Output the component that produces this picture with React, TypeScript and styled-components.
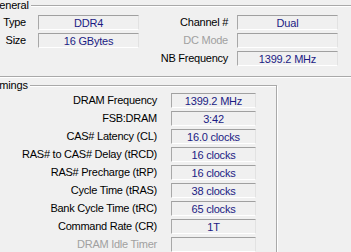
import React from "react";
import { createGlobalStyle, styled } from "styled-components";

const GlobalStyle = createGlobalStyle`
  html,
  body {
    margin: 0;
    padding: 0;
    background: #f0f0f0;
    overflow: hidden;
  }

  body {
    font-family: "Liberation Sans", Arial, sans-serif;
    font-size: 11px;
    -webkit-font-smoothing: antialiased;
  }
`;

const Window = styled.div`
  width: 351px;
  height: 252px;
  overflow: hidden;
  background: #f0f0f0;
`;

// the screenshot is a crop of the CPU-Z window, so the panels start left of the frame
const Panels = styled.div`
  margin-left: -16px;
  padding-top: 5px;
  display: flex;
  flex-direction: column;
  align-items: flex-start;
`;

const GroupBox = styled.section<{ $width: number; $top?: number; $padTop: number }>`
  position: relative;
  box-sizing: border-box;
  width: ${(p) => p.$width}px;
  margin-top: ${(p) => p.$top ?? 0}px;
  padding: ${(p) => p.$padTop}px 20px 10px 5px;
  border: 1px solid #a9a9a9;
  box-shadow:
    inset 1px 1px 0 #ffffff,
    1px 1px 0 #ffffff;
`;

// caption sits on top of the group box's top edge
const Caption = styled.span`
  position: absolute;
  top: -7px;
  left: 4px;
  padding: 0 2px;
  line-height: 12px;
  font-size: 11px;
  letter-spacing: -0.2px;
  color: #000;
  background: #f0f0f0;
`;

const GeneralGrid = styled.div`
  display: grid;
  grid-template-columns: 48px 101px 98px 101px;
  grid-auto-rows: 15px;
  row-gap: 3px;
`;

const TimingsGrid = styled.div`
  display: grid;
  grid-template-columns: 181px 85px;
  grid-auto-rows: 15px;
  row-gap: 3px;
`;

const Label = styled.div<{ $pad: number; $disabled?: boolean }>`
  padding-right: ${(p) => p.$pad}px;
  text-align: right;
  line-height: 15px;
  white-space: nowrap;
  letter-spacing: -0.25px;
  color: ${(p) => (p.$disabled ? "#a0a0a0" : "#000")};
`;

const Value = styled.div`
  box-sizing: border-box;
  display: flex;
  align-items: center;
  justify-content: center;
  height: 15px;
  border-top: 1px solid #a0a0a0;
  border-left: 1px solid #a8a8a8;
  border-right: 1px solid #e2e2e2;
  border-bottom: 1px solid #ffffff;
  background: #f0f0f0;
  color: #1b1b84;
  white-space: nowrap;
  letter-spacing: -0.2px;
`;

const Spacer = styled.div``;

const timings: { label: string; value: string; disabled?: boolean }[] = [
  { label: "DRAM Frequency", value: "1399.2 MHz" },
  { label: "FSB:DRAM", value: "3:42" },
  { label: "CAS# Latency (CL)", value: "16.0 clocks" },
  { label: "RAS# to CAS# Delay (tRCD)", value: "16 clocks" },
  { label: "RAS# Precharge (tRP)", value: "16 clocks" },
  { label: "Cycle Time (tRAS)", value: "38 clocks" },
  { label: "Bank Cycle Time (tRC)", value: "65 clocks" },
  { label: "Command Rate (CR)", value: "1T" },
  { label: "DRAM Idle Timer", value: "", disabled: true },
];

export default function App() {
  return (
    <>
      <GlobalStyle />
      <Window>
        <Panels>
          <GroupBox $width={400} $padTop={9}>
            <Caption>General</Caption>
            <GeneralGrid>
              <Label $pad={12}>Type</Label>
              <Value>DDR4</Value>
              <Label $pad={9}>Channel #</Label>
              <Value>Dual</Value>

              <Label $pad={12}>Size</Label>
              <Value>16 GBytes</Value>
              <Label $pad={9} $disabled>
                DC Mode
              </Label>
              <Value />

              <Spacer />
              <Spacer />
              <Label $pad={9}>NB Frequency</Label>
              <Value>1399.2 MHz</Value>
            </GeneralGrid>
          </GroupBox>

          <GroupBox $width={293} $top={8} $padTop={7}>
            <Caption>Timings</Caption>
            <TimingsGrid>
              {timings.map((t) => (
                <React.Fragment key={t.label}>
                  <Label $pad={14} $disabled={t.disabled}>
                    {t.label}
                  </Label>
                  <Value>{t.value}</Value>
                </React.Fragment>
              ))}
            </TimingsGrid>
          </GroupBox>
        </Panels>
      </Window>
    </>
  );
}
